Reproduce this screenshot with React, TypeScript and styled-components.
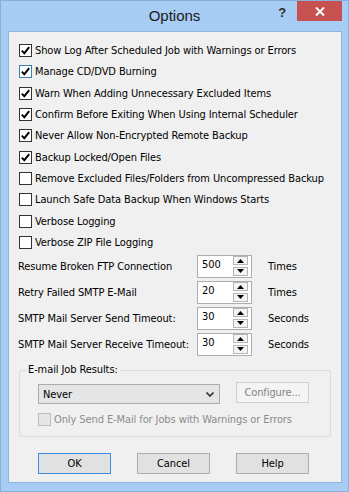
import React from "react";
import styled, { createGlobalStyle } from "styled-components";

const Global = createGlobalStyle`
  html, body { margin: 0; padding: 0; background: #a7cdf4; }
  * { box-sizing: border-box; }
`;

const UI_FONT = `"DejaVu Sans Condensed", "DejaVu Sans", "Liberation Sans", sans-serif`;

const Window = styled.div`
  width: 349px;
  height: 492px;
  background: #a7cdf4;
  border: 1px solid #88b0da;
  display: flex;
  flex-direction: column;
  font-family: ${UI_FONT};
  font-size: 11px;
  letter-spacing: -0.1px;
  color: #000;
`;

const TitleBar = styled.div`
  height: 30px;
  display: grid;
  grid-template-columns: 1fr auto 1fr;
  align-items: start;
`;

const Title = styled.div`
  font-family: "Liberation Sans", Arial, sans-serif;
  font-size: 15px;
  letter-spacing: 0;
  color: #1b1b1b;
  line-height: 29px;
  grid-column: 2;
`;

const Controls = styled.div`
  grid-column: 3;
  justify-self: end;
  display: flex;
  align-items: flex-start;
  margin-right: 6px;
`;

const HelpMark = styled.span`
  font-family: "Liberation Sans", Arial, sans-serif;
  font-weight: bold;
  font-size: 13px;
  color: #2b2b2b;
  line-height: 14px;
  margin-top: 5px;
  margin-right: 11px;
`;

const CloseBtn = styled.div`
  width: 45px;
  height: 20px;
  background: #c75050;
  display: flex;
  align-items: center;
  justify-content: center;
`;

const Panel = styled.div`
  margin: 0 6px 0 7px;
  height: 452px;
  background: #f0f0f0;
  border: 1px solid #8fb5dd;
  display: flex;
  flex-direction: column;
`;

const CheckList = styled.div`
  padding: 7.8px 0 0 10px;
  display: flex;
  flex-direction: column;
`;

const CheckRow = styled.label<{ $disabled?: boolean }>`
  height: 21.333px;
  display: flex;
  align-items: center;
  gap: 3px;
  color: ${(p) => (p.$disabled ? "#8d8d8d" : "#000")};
`;

const SubCheckRow = styled(CheckRow)`
  height: 13px;
`;

const Box = styled.span<{ $focus?: boolean; $disabled?: boolean }>`
  width: 13px;
  height: 13px;
  flex: none;
  background: ${(p) => (p.$disabled ? "#e6e6e6" : "#fff")};
  border: 1px solid
    ${(p) => (p.$disabled ? "#bcbcbc" : p.$focus ? "#3c7fb1" : "#333")};
  display: flex;
  align-items: center;
  justify-content: center;
`;

const Check = ({ on, focus, disabled }: { on?: boolean; focus?: boolean; disabled?: boolean }) => (
  <Box $focus={focus} $disabled={disabled}>
    {on && (
      <svg width="11" height="11" viewBox="0 0 11 11">
        <path d="M1.8 5.6 L4.3 8.2 L9.2 2.2" fill="none" stroke="#000" strokeWidth="1.9" />
      </svg>
    )}
  </Box>
);

const SpinList = styled.div`
  padding: 0 0 0 9px;
  display: flex;
  flex-direction: column;
`;

const SpinRow = styled.div`
  height: 26px;
  display: grid;
  grid-template-columns: 179px 55px auto;
  align-items: center;
`;

const SpinLabel = styled.span`
  white-space: nowrap;
`;

const Unit = styled.span`
  padding-left: 16px;
`;

const SpinBox = styled.div`
  height: 23px;
  background: #fff;
  border: 1px solid #adadad;
  display: flex;
  align-items: flex-start;
`;

const SpinValue = styled.span`
  flex: 1;
  padding: 2px 0 0 4px;
  line-height: 14px;
`;

const SpinCol = styled.div`
  display: flex;
  flex-direction: column;
  gap: 1.5px;
  margin: 0 3px 0 0;
  padding-top: 0.5px;
`;

const SpinBtn = styled.div`
  width: 15px;
  height: 9px;
  border: 1px solid #b5b5b5;
  background: #f4f4f4;
  display: flex;
  align-items: center;
  justify-content: center;
`;

const Tri = ({ up }: { up?: boolean }) => (
  <svg width="7" height="4" viewBox="0 0 7 4">
    <path d={up ? "M0 4 L3.5 0 L7 4 Z" : "M0 0 L3.5 4 L7 0 Z"} fill="#000" />
  </svg>
);

const Group = styled.fieldset`
  margin: 6px 10px 0 10px;
  padding: 7px 10px 10px 18px;
  border: 1px solid #dcdcdc;
  border-radius: 2px;
  display: flex;
  flex-direction: column;
  gap: 9px;
  min-width: 0;
`;

const Legend = styled.legend`
  padding: 0 2px;
  margin-left: -12px;
  line-height: 14px;
`;

const SelectRow = styled.div`
  display: flex;
  align-items: flex-start;
  gap: 16px;
`;

const Select = styled.div`
  width: 182px;
  height: 20px;
  background: #e5e5e5;
  border: 1px solid #acacac;
  display: flex;
  align-items: center;
  justify-content: space-between;
  padding: 0 5px 0 4px;
`;

const Button = styled.div<{ $default?: boolean; $disabled?: boolean }>`
  width: 73px;
  height: 21px;
  display: flex;
  align-items: center;
  justify-content: center;
  border: 1px solid
    ${(p) => (p.$disabled ? "#cfcfcf" : p.$default ? "#3c8ee0" : "#adadad")};
  color: ${(p) => (p.$disabled ? "#838383" : "#000")};
  background: ${(p) => (p.$disabled ? "#f4f4f4" : "#e1e1e1")};
`;

const ConfigureBtn = styled(Button)`
  margin-top: -2px;
`;

const Buttons = styled.div`
  display: flex;
  gap: 26px;
  margin: 16px 0 0 29px;
`;

const checks: [string, boolean, boolean?][] = [
  ["Show Log After Scheduled Job with Warnings or Errors", true],
  ["Manage CD/DVD Burning", true, true],
  ["Warn When Adding Unnecessary Excluded Items", true],
  ["Confirm Before Exiting When Using Internal Scheduler", true],
  ["Never Allow Non-Encrypted Remote Backup", true],
  ["Backup Locked/Open Files", true],
  ["Remove Excluded Files/Folders from Uncompressed Backup", false],
  ["Launch Safe Data Backup When Windows Starts", false],
  ["Verbose Logging", false],
  ["Verbose ZIP File Logging", false],
];

const spins: [string, string, string][] = [
  ["Resume Broken FTP Connection", "500", "Times"],
  ["Retry Failed SMTP E-Mail", "20", "Times"],
  ["SMTP Mail Server Send Timeout:", "30", "Seconds"],
  ["SMTP Mail Server Receive Timeout:", "30", "Seconds"],
];

export default function App() {
  return (
    <>
      <Global />
      <Window>
        <TitleBar>
          <Title>Options</Title>
          <Controls>
            <HelpMark>?</HelpMark>
            <CloseBtn>
              <svg width="10" height="9" viewBox="0 0 10 9">
                <path d="M1 0.5 L9 8.5 M9 0.5 L1 8.5" stroke="#fff" strokeWidth="2" />
              </svg>
            </CloseBtn>
          </Controls>
        </TitleBar>
        <Panel>
          <CheckList>
            {checks.map(([t, on, f]) => (
              <CheckRow key={t}>
                <Check on={on} focus={f} />
                <span>{t}</span>
              </CheckRow>
            ))}
          </CheckList>
          <SpinList>
            {spins.map(([l, v, u]) => (
              <SpinRow key={l}>
                <SpinLabel>{l}</SpinLabel>
                <SpinBox>
                  <SpinValue>{v}</SpinValue>
                  <SpinCol>
                    <SpinBtn>
                      <Tri up />
                    </SpinBtn>
                    <SpinBtn>
                      <Tri />
                    </SpinBtn>
                  </SpinCol>
                </SpinBox>
                <Unit>{u}</Unit>
              </SpinRow>
            ))}
          </SpinList>
          <Group>
            <Legend>E-mail Job Results:</Legend>
            <SelectRow>
              <Select>
                <span>Never</span>
                <svg width="8" height="5" viewBox="0 0 8 5">
                  <path d="M0.5 0.5 L4 4 L7.5 0.5" fill="none" stroke="#333" strokeWidth="1.6" />
                </svg>
              </Select>
              <ConfigureBtn $disabled>Configure...</ConfigureBtn>
            </SelectRow>
            <SubCheckRow $disabled>
              <Check disabled />
              <span>Only Send E-Mail for Jobs with Warnings or Errors</span>
            </SubCheckRow>
          </Group>
          <Buttons>
            <Button $default>OK</Button>
            <Button>Cancel</Button>
            <Button>Help</Button>
          </Buttons>
        </Panel>
      </Window>
    </>
  );
}
